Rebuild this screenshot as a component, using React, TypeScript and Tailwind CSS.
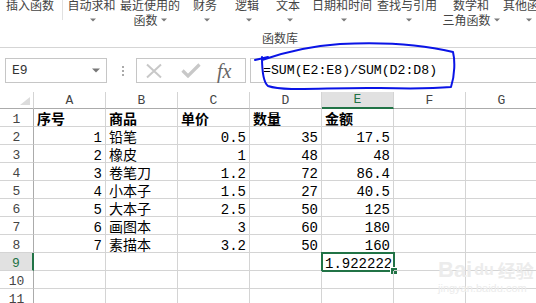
import React from 'react';

const Caret = ({ className = '' }: { className?: string }) => (
  <svg width="6" height="4" viewBox="0 0 6 4" className={className}>
    <path d="M0 0.5h6L3 3.5z" fill="#7a7a7a" />
  </svg>
);

type Btn = { w: string; l1: string; l2?: string };

const buttons: Btn[] = [
  { w: 'w-[57px]', l1: '自动求和' },
  { w: 'w-[60px]', l1: '最近使用的', l2: '函数' },
  { w: 'w-[50px]', l1: '财务' },
  { w: 'w-[34px]', l1: '逻辑' },
  { w: 'w-[48px]', l1: '文本' },
  { w: 'w-[60px]', l1: '日期和时间' },
  { w: 'w-[70px]', l1: '查找与引用' },
  { w: 'w-[58px]', l1: '数学和', l2: '三角函数' },
  { w: 'w-[54px]', l1: '其他函数' },
];

const cols = ['A', 'B', 'C', 'D', 'E', 'F', 'G'];

const data: string[][] = [
  ['序号', '商品', '单价', '数量', '金额', '', ''],
  ['1', '铅笔', '0.5', '35', '17.5', '', ''],
  ['2', '橡皮', '1', '48', '48', '', ''],
  ['3', '卷笔刀', '1.2', '72', '86.4', '', ''],
  ['4', '小本子', '1.5', '27', '40.5', '', ''],
  ['5', '大本子', '2.5', '50', '125', '', ''],
  ['6', '画图本', '3', '60', '180', '', ''],
  ['7', '素描本', '3.2', '50', '160', '', ''],
  ['', '', '', '', '1.922222', '', ''],
  ['', '', '', '', '', '', ''],
  ['', '', '', '', '', '', ''],
];

function Ribbon() {
  return (
    <div className="h-[51px] border-b border-[#d5d5d5] font-['Noto_Sans_CJK_SC',sans-serif] text-[12px] text-[#444]">
      <div className="-mt-[3px] flex leading-[15px]">
        <div className="w-[60px] shrink-0 text-center whitespace-nowrap">插入函数</div>
        <div className="ml-[2px] mt-[3px] h-[20px] w-px shrink-0 bg-[#e1e1e1]" />
        {buttons.map((b) => (
          <div key={b.l1} className={`${b.w} flex shrink-0 flex-col items-center whitespace-nowrap`}>
            <div>{b.l1}</div>
            {b.l2 ? (
              <div className="flex items-center">
                {b.l2}
                <Caret className="ml-[3px]" />
              </div>
            ) : (
              <div className="flex h-[15px] items-center pl-[3px]">
                <Caret />
              </div>
            )}
          </div>
        ))}
      </div>
      <div className="mt-[4px] pl-[262px] leading-[14px]">函数库</div>
    </div>
  );
}

function FormulaBar() {
  return (
    <div className="flex h-[44px] items-start pt-[10px]">
      <div className="ml-[5px] flex h-[25px] w-[102px] shrink-0 items-center justify-between border border-[#c6c6c6] pl-[6px] pr-[6px] font-['Liberation_Mono',monospace] text-[13px] text-[#333]">
        <span>E9</span>
        <svg width="8" height="5" viewBox="0 0 8 5">
          <path d="M0 0.5h8L4 4.5z" fill="#777" />
        </svg>
      </div>
      <div className="ml-[14px] flex h-[25px] w-[3px] flex-col items-center justify-center gap-[2px]">
        <div className="h-[2px] w-[2px] bg-[#aaa]" />
        <div className="h-[2px] w-[2px] bg-[#aaa]" />
        <div className="h-[2px] w-[2px] bg-[#aaa]" />
      </div>
      <div className="ml-[12px] flex h-[25px] w-[110px] shrink-0 items-center border border-[#c6c6c6]">
        <svg width="18" height="16" viewBox="0 0 18 16" className="ml-[8px]">
          <path d="M2 1.5L16 14.5M16 1.5L2 14.5" stroke="#c8c8c8" strokeWidth="2" />
        </svg>
        <svg width="20" height="15" viewBox="0 0 20 15" className="ml-[18px]">
          <path d="M1.5 7.5L7 13L18.5 1.5" stroke="#c8c8c8" strokeWidth="3.2" fill="none" />
        </svg>
        <span className="ml-[16px] font-['Liberation_Serif',serif] text-[20px] italic leading-[20px] text-[#666]">fx</span>
      </div>
      <div className="ml-[4px] flex h-[25px] flex-1 items-center border border-r-0 border-[#c6c6c6] pl-[12px] font-['Liberation_Mono',monospace] text-[13.2px] text-black">
        =SUM(E2:E8)/SUM(D2:D8)
      </div>
    </div>
  );
}

function Grid() {
  return (
    <div className="font-['Liberation_Mono','Noto_Sans_CJK_SC',monospace] text-[14px] text-black">
      {/* column headers */}
      <div className="flex h-[17px]">
        <div className="relative w-[34px] shrink-0 border-b border-r border-[#ababab] border-r-[#d4d4d4]">
          <svg width="11" height="9" viewBox="0 0 11 9" className="absolute left-[20px] top-[5px]">
            <path d="M10 0V8H0z" fill="#dcdcdc" />
          </svg>
        </div>
        {cols.map((c) => (
          <div
            key={c}
            className={
              c === 'E'
                ? 'flex w-[72px] shrink-0 items-center justify-center border-b-2 border-r border-b-[#217346] border-r-[#d4d4d4] bg-[#e1e1e1] pt-[1px] text-[13px] text-[#217346]'
                : 'flex w-[72px] shrink-0 items-center justify-center border-b border-r border-b-[#ababab] border-r-[#d4d4d4] pt-[1px] text-[13px] text-[#444]'
            }
          >
            {c}
          </div>
        ))}
      </div>
      {data.map((row, ri) => {
        const n = ri + 1;
        return (
          <div key={n} className="flex h-[18px]">
            <div
              className={
                n === 9
                  ? 'w-[34px] shrink-0 border-b border-r-2 border-b-[#d4d4d4] border-r-[#217346] bg-[#e1e1e1] pt-[3px] text-center text-[13px] leading-[16px] text-[#217346]'
                  : 'w-[34px] shrink-0 border-b border-r border-b-[#d4d4d4] border-r-[#ababab] pt-[3px] text-center text-[13px] leading-[16px] text-[#444]'
              }
            >
              {n}
            </div>
            {row.map((v, ci) => {
              const left = n === 1 || ci === 1;
              return (
                <div
                  key={ci}
                  className={`relative w-[72px] shrink-0 whitespace-nowrap border-b border-r border-[#d4d4d4] px-[3px] pt-[3px] leading-[16px] ${
                    left ? 'text-left' : 'text-right'
                  } ${n === 1 ? 'font-bold' : ''}`}
                >
                  {v}
                  {n === 9 && ci === 4 && (
                    <>
                      <div className="absolute -left-px -top-px h-[20px] w-[74px] border-2 border-[#217346]" />
                      <div className="absolute left-[68px] top-[14px] h-[8px] w-[8px] border border-white bg-[#217346]" />
                    </>
                  )}
                </div>
              );
            })}
          </div>
        );
      })}
    </div>
  );
}

export default function App() {
  return (
    <div className="relative h-[303px] w-[536px] overflow-hidden bg-white">
      <Ribbon />
      <FormulaBar />
      <Grid />

      {/* watermark */}
      <div className="pointer-events-none absolute left-[438px] top-[258px] flex w-[110px] flex-col items-start whitespace-nowrap text-[#ececec]">
        <div className="flex items-end font-['Liberation_Sans',sans-serif] text-[22px] font-bold leading-[24px]">
          <span>Bai</span>
          <span className="ml-[2px] text-[16px]">du</span>
          <span className="ml-[4px] font-['Noto_Sans_CJK_SC',sans-serif] text-[18px]">经验</span>
        </div>
        <div className="font-['Liberation_Sans',sans-serif] text-[11px] leading-[12px]">jingyan.baidu.com</div>
      </div>

      {/* pen annotation around the formula */}
      <svg className="pointer-events-none absolute left-0 top-0" width="536" height="303" viewBox="0 0 536 303">
        <path
          d="M255 60 L268 57 M262 57 C262 70 263 82 268 86 C285 92 330 87 380 88 C420 89 440 88 451 87 C455 75 455 60 453 52 C420 44 380 42 340 44 C310 46 285 52 262 60"
          stroke="#0a14e6"
          strokeWidth="2"
          fill="none"
          strokeLinecap="round"
          strokeLinejoin="round"
        />
      </svg>
    </div>
  );
}
